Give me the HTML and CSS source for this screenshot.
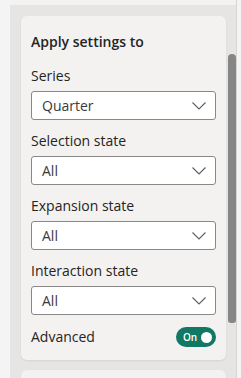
FILE: index.html
```html
<!DOCTYPE html>
<html lang="en">
<head>
    <meta charset="UTF-8">
    <meta name="viewport" content="width=device-width, initial-scale=1.0">
    <title>Format pane</title>
    <link rel="stylesheet" href="styles.css">
</head>
<body>
    <div class="pane">
        <div class="pane-top"></div>
        <div class="pane-body">
            <div class="cards">
                <div class="card">
                    <h2 class="card-title">Apply settings to</h2>

                    <div class="field">
                        <label class="field-label">Series</label>
                        <div class="dropdown">
                            <span>Quarter</span>
                            <svg class="chevron" width="14" height="8" viewBox="0 0 14 8"><path d="M0.5 0.5 L7 7 L13.5 0.5" fill="none" stroke="#605e5c" stroke-width="1.1"/></svg>
                        </div>
                    </div>

                    <div class="field">
                        <label class="field-label">Selection state</label>
                        <div class="dropdown">
                            <span>All</span>
                            <svg class="chevron" width="14" height="8" viewBox="0 0 14 8"><path d="M0.5 0.5 L7 7 L13.5 0.5" fill="none" stroke="#605e5c" stroke-width="1.1"/></svg>
                        </div>
                    </div>

                    <div class="field">
                        <label class="field-label">Expansion state</label>
                        <div class="dropdown">
                            <span>All</span>
                            <svg class="chevron" width="14" height="8" viewBox="0 0 14 8"><path d="M0.5 0.5 L7 7 L13.5 0.5" fill="none" stroke="#605e5c" stroke-width="1.1"/></svg>
                        </div>
                    </div>

                    <div class="field">
                        <label class="field-label">Interaction state</label>
                        <div class="dropdown">
                            <span>All</span>
                            <svg class="chevron" width="14" height="8" viewBox="0 0 14 8"><path d="M0.5 0.5 L7 7 L13.5 0.5" fill="none" stroke="#605e5c" stroke-width="1.1"/></svg>
                        </div>
                    </div>

                    <div class="toggle-row">
                        <span class="field-label">Advanced</span>
                        <div class="toggle">
                            <span class="toggle-text">On</span>
                            <span class="toggle-knob"></span>
                        </div>
                    </div>
                </div>
                <div class="card card-next"></div>
            </div>
            <div class="scrollbar">
                <div class="scroll-thumb"></div>
            </div>
        </div>
    </div>
</body>
</html>
```

FILE: styles.css
```css
/* Reset */
body, h2 {
    margin: 0;
    padding: 0;
}

body {
    font-family: 'Open Sans', 'Noto Sans', sans-serif;
    background: #f4f4f4;
    color: #252423;
    height: 378px;
    overflow: hidden;
}

/* Painel cinza */
.pane {
    margin-left: 10px;
    width: 226px;
    height: 378px;
    overflow: hidden;
    background: #e6e5e4;
    border-right: 1px solid #d6d5d4;
}

.pane-top {
    height: 5px;
    background: #f3f2f1;
}

.pane-body {
    display: flex;
}

.cards {
    margin-left: 11px;
    width: 205px;
    padding-top: 11px;
}

.card {
    background: #f3f2f1;
    border-radius: 6px;
    padding: 16px 10px 13px 10px;
    box-shadow: 0 1px 2px rgba(0, 0, 0, 0.08);
}

.card-next {
    margin-top: 10px;
    height: 30px;
    padding: 0;
}

.card-title {
    font-size: 14px;
    font-weight: 600;
    line-height: 20px;
    margin-bottom: 14px;
}

.field {
    margin-bottom: 11px;
}

.field-label {
    display: block;
    font-size: 14px;
    line-height: 20px;
    margin-bottom: 5px;
}

.dropdown {
    height: 27px;
    border: 1px solid #8a8886;
    border-radius: 3px;
    background: #ffffff;
    display: flex;
    align-items: center;
    justify-content: space-between;
    padding: 0 9px 0 10px;
    font-size: 14px;
    color: #3b3a39;
}

.chevron {
    display: block;
}

/* Linha do Advanced */
.toggle-row {
    display: flex;
    align-items: center;
    justify-content: space-between;
    margin-top: 12px;
}

.toggle-row .field-label {
    margin-bottom: 0;
}

.toggle {
    width: 40px;
    height: 20px;
    border-radius: 10px;
    background: #117865;
    display: flex;
    align-items: center;
    justify-content: space-between;
    padding: 0 4px 0 7px;
    box-sizing: border-box;
}

.toggle-text {
    color: white;
    font-size: 10px;
    font-weight: 600;
    line-height: 20px;
}

.toggle-knob {
    width: 11px;
    height: 11px;
    border-radius: 50%;
    background: white;
}

/* Barra de rolagem */
.scrollbar {
    width: 8px;
    margin-left: 2px;
}

.scroll-thumb {
    margin-top: 49px;
    height: 269px;
    background: #868686;
    border-radius: 4px 4px 3px 3px;
}
```
